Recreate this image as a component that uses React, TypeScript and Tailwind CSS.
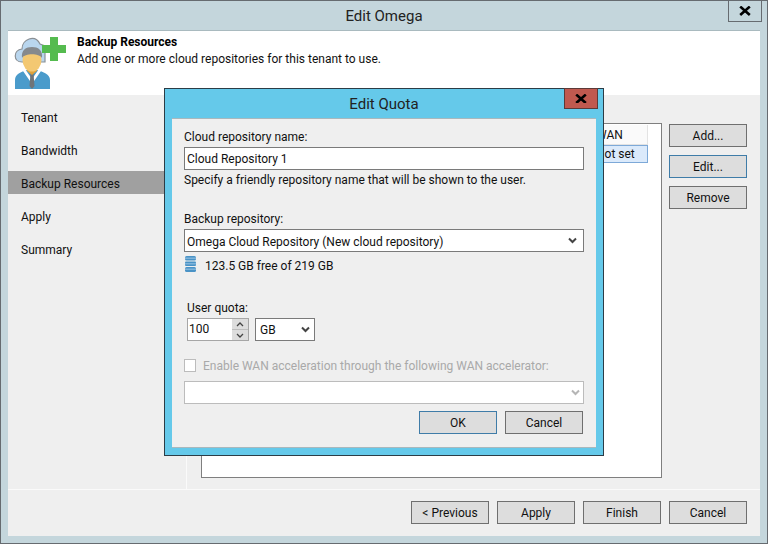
import React from "react";

const font = { fontFamily: 'Roboto, "Noto Sans", sans-serif' };

function Btn({ children, focus, className = "" }: { children: React.ReactNode; focus?: boolean; className?: string }) {
  return (
    <div
      className={
        "w-[78px] h-[23px] flex items-center justify-center bg-[#dddddd] border text-[12px] leading-none text-[#111] " +
        (focus ? "border-[#3f7ca8] " : "border-[#6f6f6f] ") +
        className
      }
    >
      {children}
    </div>
  );
}

function Chevron({ color = "#444" }: { color?: string }) {
  return (
    <svg width="9" height="7" viewBox="0 0 9 7" className="shrink-0">
      <path d="M1 1.5 L4.5 5 L8 1.5" fill="none" stroke={color} strokeWidth="2" />
    </svg>
  );
}

function PersonIcon() {
  return (
    <svg width="54" height="54" viewBox="13 36 54 54" className="shrink-0">
      <path d="M21 62 C12 62 12 50 21 49 C21 39 34 34 39 44 L44 46 L44 62 Z" fill="#b9d6ee" stroke="#8a8f94" strokeWidth="1.2" />
      <path d="M14 89 L14 80 C14 74 20 72 26 70 L36 70 C42 72 49 74 49 80 L49 89 Z" fill="#4a9bcb" />
      <path d="M24 69 L31 79 L38 69 L40 71 L31 84 L22 71 Z" fill="#ffffff" />
      <path d="M29.5 73 L32.5 73 L33.5 86 L31 89 L28.5 86 Z" fill="#6f7478" />
      <path d="M26 66 L36 66 L36 71 L31 75 L26 71 Z" fill="#dfa23b" />
      <ellipse cx="31" cy="60" rx="9.5" ry="11.5" fill="#f3c872" />
      <path d="M21 58 C20 50 25 47 31 47 C37 47 42 50 41 58 C38 53 24 53 21 58 Z" fill="#85898d" />
      <path d="M49 37 H57 V45 H65 V53 H57 V61 H49 V53 H41 V45 H49 Z" fill="#55bb4f" />
    </svg>
  );
}

function DbIcon() {
  return (
    <svg width="12" height="17" viewBox="0 0 12 17" className="shrink-0">
      <rect x="0" y="0" width="11" height="4.5" rx="1.5" fill="#4a93c6" />
      <rect x="0" y="1.5" width="11" height="1.5" fill="#7fb4da" />
      <rect x="0" y="5.5" width="11" height="4.5" rx="1" fill="#4a93c6" />
      <rect x="0" y="7" width="11" height="1.5" fill="#7fb4da" />
      <rect x="0" y="11" width="11" height="5" rx="1.5" fill="#4a93c6" />
      <rect x="0" y="12.5" width="11" height="1.5" fill="#7fb4da" />
    </svg>
  );
}

function X({ size = 12 }: { size?: number }) {
  return (
    <svg width={size} height={size * 0.8} viewBox="0 0 10 8">
      <path d="M1 0.5 L9 7.5 M9 0.5 L1 7.5" stroke="#000" strokeWidth="2.2" fill="none" />
    </svg>
  );
}

function NavItem({ label, active }: { label: string; active?: boolean }) {
  return (
    <div className={"h-[23px] mb-[10px] pl-[13px] pt-[2px] flex items-center text-[12px] leading-none " + (active ? "bg-[#a0a0a0] text-[#111]" : "text-[#111]")}>
      {label}
    </div>
  );
}

export default function App() {
  return (
    <div style={font} className="relative w-[768px] h-[544px] overflow-hidden bg-[#c4d6dc] border border-[#666b70] flex flex-col text-[#111]">
      <div className="relative h-[29px] shrink-0 pt-[2px] flex items-center justify-center text-[15px] text-[#222]">
        Edit Omega
        <div className="absolute right-[5px] -top-[1px] w-[34px] h-[22px] border border-[#666b70] flex items-center justify-center">
          <X />
        </div>
      </div>

      <div className="flex-1 mx-[7px] mb-[7px] flex flex-col border-t border-[#a9babf]">
        <div className="h-[64px] bg-white shrink-0 flex pl-[6px] pt-[5px] gap-[9px]">
          <PersonIcon />
          <div className="-mt-[2px]">
            <div className="text-[12px] font-bold leading-[17px] text-black">Backup Resources</div>
            <div className="text-[12px] leading-[17px] text-[#111]">Add one or more cloud repositories for this tenant to use.</div>
          </div>
        </div>

        <div className="flex-1 bg-[#efefef] flex flex-col">
          <div className="flex-1 flex">
            <div className="w-[179px] shrink-0 border-r border-[#fafafa] pt-[10px]">
              <NavItem label="Tenant" />
              <NavItem label="Bandwidth" />
              <NavItem label="Backup Resources" active />
              <NavItem label="Apply" />
              <NavItem label="Summary" />
            </div>
            <div className="flex-1 flex pt-[28px] pl-[14px]">
              <div className="w-[461px] h-[355px] bg-white border border-[#7f7f7f] pt-[1px] pl-[1px]">
                <div className="w-[445px] h-[20px] flex border-b border-[#e3e3e3] bg-[#fafafa] text-[12px] leading-none">
                  <div className="w-[392px]" />
                  <div className="flex-1 flex items-center pl-[1px] border-r border-[#e3e3e3]">WAN</div>
                </div>
                <div className="w-[445px] h-[18px] flex bg-[#dbeafb] border border-[#7da9d8] text-[12px] leading-none">
                  <div className="w-[392px]" />
                  <div className="flex-1 flex items-center">Not set</div>
                </div>
              </div>
              <div className="ml-[7px] pt-[1px] flex flex-col gap-[8px]">
                <Btn>Add...</Btn>
                <Btn focus>Edit...</Btn>
                <Btn>Remove</Btn>
              </div>
            </div>
          </div>
          <div className="h-[47px] shrink-0 border-t border-[#fafafa] flex justify-end gap-[8px] pr-[13px] pt-[11px]">
            <Btn>&lt; Previous</Btn>
            <Btn>Apply</Btn>
            <Btn>Finish</Btn>
            <Btn>Cancel</Btn>
          </div>
        </div>
      </div>

      {/* Modal dialog */}
      <div className="absolute left-[163px] top-[87px] w-[440px] h-[368px] bg-[#65c9ea] border border-[#2c3c46] flex flex-col">
        <div className="relative h-[29px] shrink-0 pt-[2px] flex items-center justify-center text-[15px] text-[#222]">
          Edit Quota
          <div className="absolute right-[5px] -top-[1px] w-[34px] h-[21px] bg-[#c0594f] border border-[#5d3a38] flex items-center justify-center">
            <X />
          </div>
        </div>
        <div className="flex-1 mx-[7px] mb-[7px] bg-[#efefef] border-t border-b border-[#a9b8bd] pl-[12px] pr-[12px] flex flex-col text-[12px] leading-none">
          <div className="mt-[10px] h-[14px] pt-[2px] flex items-center">Cloud repository name:</div>
          <div className="mt-[4px] h-[23px] bg-white border border-[#7a7a7a] flex items-center pl-[2px]">Cloud Repository 1</div>
          <div className="mt-[3px] h-[14px] flex items-center">Specify a friendly repository name that will be shown to the user.</div>

          <div className="mt-[24px] h-[14px] pt-[2px] flex items-center">Backup repository:</div>
          <div className="mt-[4px] h-[23px] bg-white border border-[#7a7a7a] flex items-center justify-between pl-[2px] pr-[6px]">
            <span className="pt-[2px]">Omega Cloud Repository (New cloud repository)</span>
            <Chevron />
          </div>
          <div className="mt-[4px] h-[17px] flex items-center pl-[1px] gap-[8px]">
            <DbIcon />
            <span className="pt-[2px]">123.5 GB free of 219 GB</span>
          </div>

          <div className="mt-[27px] pl-[3px] h-[14px] pt-[2px] flex items-center">User quota:</div>
          <div className="mt-[4px] pl-[3px] flex gap-[6px]">
            <div className="w-[62px] h-[23px] bg-white border border-[#a6a6a6] flex items-center justify-between pl-[1px]">
              <span className="pb-[2px]">100</span>
              <div className="w-[16px] h-full flex flex-col gap-[1px] bg-[#bdbdbd]">
                <div className="flex-1 bg-[#dddddd] flex items-center justify-center">
                  <svg width="8" height="5" viewBox="0 0 8 5"><path d="M1 4 L4 1 L7 4" fill="none" stroke="#444" strokeWidth="1.3" /></svg>
                </div>
                <div className="flex-1 bg-[#dddddd] flex items-center justify-center">
                  <svg width="8" height="5" viewBox="0 0 8 5"><path d="M1 1 L4 4 L7 1" fill="none" stroke="#444" strokeWidth="1.3" /></svg>
                </div>
              </div>
            </div>
            <div className="w-[60px] h-[23px] bg-white border border-[#7a7a7a] flex items-center justify-between pl-[4px] pr-[4px]">
              GB
              <Chevron />
            </div>
          </div>

          <div className="mt-[17px] h-[14px] flex items-center gap-[7px] text-[#a9a9a9]">
            <div className="w-[12px] h-[13px] bg-white border border-[#bcbcbc] shrink-0" />
            <span className="pt-[2px]">Enable WAN acceleration through the following WAN accelerator:</span>
          </div>
          <div className="mt-[9px] h-[23px] bg-white border border-[#bcbcbc] flex items-center justify-end pr-[3px]">
            <Chevron color="#b5b5b5" />
          </div>
          <div className="mt-[7px] flex justify-end gap-[8px] pr-[1px]">
            <Btn focus>OK</Btn>
            <Btn>Cancel</Btn>
          </div>
        </div>
      </div>
    </div>
  );
}
